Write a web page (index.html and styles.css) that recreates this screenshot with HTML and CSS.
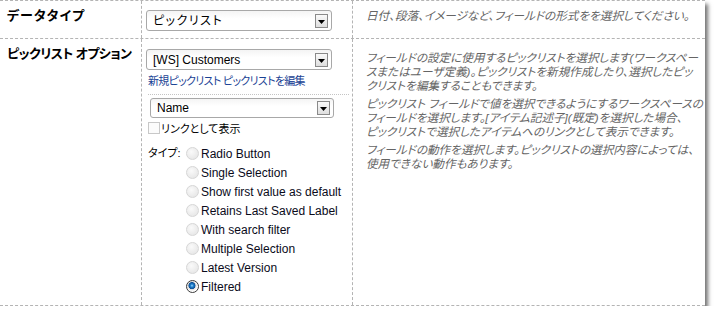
FILE: index.html
```html
<!DOCTYPE html>
<html lang="ja">
<head>
<meta charset="utf-8">
<link rel="stylesheet" href="styles.css">
</head>
<body>
<div class="frame">
  <div class="row row-first">
    <div class="cell cell-label cell-label-first">データタイプ</div>
    <div class="cell cell-field cell-field-first">
      <div class="select">
        <span class="select-value select-value-ja">ピックリスト</span>
        <span class="select-btn"><svg width="7" height="4" viewBox="0 0 7 4"><path d="M0 0H7L3.5 4Z" fill="#000"/></svg></span>
      </div>
    </div>
    <div class="cell cell-help">
      <p class="help-line">日付、段落、イメージなど、フィールドの形式をを選択してください。</p>
    </div>
  </div>
  <div class="row row-second">
    <div class="cell cell-label cell-label-second">ピックリスト オプション</div>
    <div class="cell cell-field cell-field-second">
      <div class="select">
        <span class="select-value">[WS] Customers</span>
        <span class="select-btn"><svg width="7" height="4" viewBox="0 0 7 4"><path d="M0 0H7L3.5 4Z" fill="#000"/></svg></span>
      </div>
      <div class="links"><a class="link">新規ピックリスト</a> <a class="link">ピックリストを編集</a></div>
      <div class="sub">
        <div class="select select-sub">
          <span class="select-value">Name</span>
          <span class="select-btn"><svg width="7" height="4" viewBox="0 0 7 4"><path d="M0 0H7L3.5 4Z" fill="#000"/></svg></span>
        </div>
        <div class="check-row"><span class="checkbox"></span><span class="check-text">リンクとして表示</span></div>
        <div class="type-block">
          <div class="type-label">タイプ:</div>
          <div class="radios">
            <div class="radio-row"><span class="radio"></span><span class="radio-text">Radio Button</span></div>
            <div class="radio-row"><span class="radio"></span><span class="radio-text">Single Selection</span></div>
            <div class="radio-row"><span class="radio"></span><span class="radio-text">Show first value as default</span></div>
            <div class="radio-row"><span class="radio"></span><span class="radio-text">Retains Last Saved Label</span></div>
            <div class="radio-row"><span class="radio"></span><span class="radio-text">With search filter</span></div>
            <div class="radio-row"><span class="radio"></span><span class="radio-text">Multiple Selection</span></div>
            <div class="radio-row"><span class="radio"></span><span class="radio-text">Latest Version</span></div>
            <div class="radio-row"><span class="radio radio-checked"></span><span class="radio-text">Filtered</span></div>
          </div>
        </div>
      </div>
    </div>
    <div class="cell cell-help cell-help-second">
      <p class="help-para">フィールドの設定に使用するピックリストを選択します(ワークスペー<br>スまたはユーザ定義)。ピックリストを新規作成したり、選択したピッ<br>クリストを編集することもできます。</p>
      <p class="help-para">ピックリスト フィールドで値を選択できるようにするワークスペースの<br>フィールドを選択します。[アイテム記述子](既定)を選択した場合、<br>ピックリストで選択したアイテムへのリンクとして表示できます。</p>
      <p class="help-para">フィールドの動作を選択します。ピックリストの選択内容によっては、<br>使用できない動作もあります。</p>
    </div>
  </div>
</div>
</body>
</html>
```

FILE: styles.css
```css
html, body {
  margin: 0;
  padding: 0;
  background: #fff;
}
body {
  font-family: "Liberation Sans", "Noto Sans CJK JP", sans-serif;
  font-size: 12px;
  color: #000;
  font-feature-settings: "palt";
}
.frame {
  width: 705px;
  background: #fff;
  border-top: 1px dashed #b4b4b4;
  border-bottom: 1px dashed #b4b4b4;
  box-shadow: 3px 4px 4px rgba(0, 0, 0, 0.55);
}
.row {
  display: grid;
  grid-template-columns: 142px 211px 1fr;
}
.row-first {
  border-bottom: 1px dashed #b4b4b4;
}
.cell-label, .cell-field {
  border-right: 1px dashed #b4b4b4;
}
.cell-label {
  padding: 8px 0 0 7px;
  font-weight: bold;
  font-size: 13px;
  line-height: 14px;
}
.cell-label-first {
  letter-spacing: 1px;
}
.cell-label-second {
  letter-spacing: -0.6px;
}
.cell-field {
  padding-left: 4px;
}
.cell-field-first {
  padding-top: 9px;
  padding-bottom: 7px;
}
.cell-field-second {
  padding-top: 10px;
  padding-bottom: 9px;
}
.select {
  box-sizing: border-box;
  width: 186px;
  height: 21px;
  border: 1px solid #a8a8a8;
  border-radius: 3px;
  background: linear-gradient(#f4f4f4, #fff 40%, #fff);
  display: flex;
  align-items: center;
  justify-content: space-between;
  padding: 0 3px 0 6px;
  line-height: 14px;
}
.select-value-ja {
  letter-spacing: 1.5px;
}
.select-btn {
  box-sizing: border-box;
  width: 13px;
  height: 14px;
  border: 1px solid #8a8a8a;
  background: linear-gradient(#fafafa, #dedede);
  display: flex;
  align-items: center;
  justify-content: center;
  padding-top: 2px;
}
.select-btn svg {
  display: block;
}
.links {
  margin-top: 4px;
  padding-left: 2px;
  line-height: 14px;
  font-size: 11px;
  letter-spacing: -0.7px;
}
.link {
  color: #1a4294;
  text-decoration: none;
}
.sub {
  margin: 6px 3px 0 2px;
  border-top: 1px dotted #c4c4c4;
  padding-top: 3px;
}
.select-sub {
  width: 184px;
  height: 20px;
  margin-left: 2px;
}
.check-row {
  display: flex;
  align-items: flex-end;
  height: 16px;
  margin-top: 2px;
  line-height: 14px;
}
.checkbox {
  box-sizing: border-box;
  width: 12px;
  height: 12px;
  border: 1px solid #c8c8c8;
  background: #fbfbfb;
  margin-bottom: 2px;
  margin-right: 1px;
}
.check-text {
  font-size: 11px;
}
.type-block {
  display: flex;
  margin-top: 8px;
}
.type-label {
  width: 38px;
  height: 19px;
  line-height: 19px;
  font-size: 11px;
}
.radio-row {
  display: flex;
  align-items: center;
  height: 19px;
}
.radio {
  box-sizing: border-box;
  width: 13px;
  height: 13px;
  border-radius: 50%;
  border: 1px solid #d6d6d6;
  background: radial-gradient(circle at 40% 35%, #fafafa, #e2e2e2);
  margin-right: 2px;
}
.radio-checked {
  border: 1px solid #3a3a3a;
  background: radial-gradient(circle at 45% 42%, #9ad6ff 0, #1f80cc 1.5px, #0c4f96 3.2px, #dcdcdc 3.8px, #fff 5.5px);
}
.radio-text {
  color: #0a0a1a;
  line-height: 14px;
}
.cell-help {
  padding: 8px 0 0 13px;
  color: #656565;
  font-style: italic;
  font-size: 11.6px;
  line-height: 14px;
  white-space: nowrap;
}
.cell-help-second {
  padding-top: 12px;
}
.help-line, .help-para {
  margin: 0;
}
.help-para {
  margin-bottom: 4px;
}
```
